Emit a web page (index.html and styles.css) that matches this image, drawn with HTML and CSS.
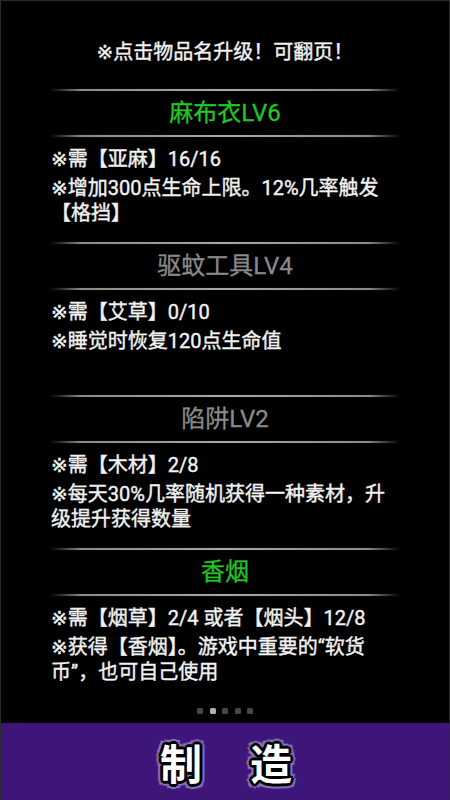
FILE: index.html
```html
<!DOCTYPE html>
<html lang="zh-CN">
<head>
<meta charset="utf-8">
<title>制造</title>
<link rel="stylesheet" href="styles.css">
</head>
<body>
<div class="screen">
  <main class="content">
    <p class="notice">※点击物品名升级！可翻页！</p>
    <div class="list">
      <section class="item">
        <div class="divider"></div>
        <h2 class="title title-ok">麻布衣LV6</h2>
        <div class="divider"></div>
        <div class="body">
          <p>※需【亚麻】16/16</p>
          <p>※增加300点生命上限。12%几率触发【格挡】</p>
        </div>
      </section>
      <section class="item">
        <div class="divider"></div>
        <h2 class="title title-locked">驱蚊工具LV4</h2>
        <div class="divider"></div>
        <div class="body">
          <p>※需【艾草】0/10</p>
          <p>※睡觉时恢复120点生命值</p>
        </div>
      </section>
      <section class="item">
        <div class="divider"></div>
        <h2 class="title title-locked">陷阱LV2</h2>
        <div class="divider"></div>
        <div class="body">
          <p>※需【木材】2/8</p>
          <p>※每天30%几率随机获得一种素材，升级提升获得数量</p>
        </div>
      </section>
      <section class="item">
        <div class="divider"></div>
        <h2 class="title title-ok">香烟</h2>
        <div class="divider"></div>
        <div class="body">
          <p>※需【烟草】2/4 或者【烟头】12/8</p>
          <p>※获得【香烟】。游戏中重要的“软货币”，也可自己使用</p>
        </div>
      </section>
    </div>
    <div class="dots">
      <span class="dot"></span>
      <span class="dot dot-active"></span>
      <span class="dot"></span>
      <span class="dot"></span>
      <span class="dot"></span>
    </div>
  </main>
  <footer class="bar">
    <span class="bar-char">制</span>
    <span class="bar-char">造</span>
  </footer>
</div>
</body>
</html>
```

FILE: styles.css
```css
* {
  box-sizing: border-box;
}

html, body {
  margin: 0;
  padding: 0;
  background: #000;
}

body {
  font-family: Roboto, "DejaVu Sans", "Noto Sans CJK SC", sans-serif;
  color: #f2f2f2;
}

.screen {
  width: 450px;
  height: 800px;
  border: 1px solid #2c2c2c;
  border-bottom: none;
  display: flex;
  flex-direction: column;
  overflow: hidden;
}

.content {
  flex: 1;
  display: flex;
  flex-direction: column;
  padding: 0 49px;
}

.notice {
  margin: 38px 0 24px;
  height: 26px;
  line-height: 26px;
  font-size: 20px;
  text-align: center;
  -webkit-text-stroke: 0.4px #f2f2f2;
}

.list {
  display: flex;
  flex-direction: column;
}

.item {
  display: flex;
  flex-direction: column;
  height: 153px;
}

.divider {
  height: 2px;
  background: linear-gradient(to right, rgba(150,150,150,0) 0%, #8a8a8a 9%, #a8a8a8 50%, #8a8a8a 91%, rgba(150,150,150,0) 100%);
  box-shadow: 0 0 1px rgba(120,120,120,0.6);
}

.title {
  margin: 0;
  height: 44px;
  line-height: 44px;
  font-size: 24px;
  font-weight: normal;
  text-align: center;
  -webkit-text-stroke: 0.3px currentColor;
}

.title-ok {
  color: #25c525;
}

.title-locked {
  color: #8a8a8a;
}

.body {
  padding: 10px 3px 0 1px;
  display: flex;
  flex-direction: column;
  gap: 4px;
}

.body p {
  margin: 0;
  font-size: 20px;
  line-height: 25px;
  -webkit-text-stroke: 0.4px #f2f2f2;
}

.dots {
  margin-top: auto;
  margin-bottom: 9px;
  display: flex;
  justify-content: center;
  gap: 6.5px;
}

.dot {
  width: 6px;
  height: 6px;
  border-radius: 1.5px;
  background: #474747;
}

.dot-active {
  background: #b0b0b0;
}

.bar {
  height: 77px;
  background: #3e1578;
  display: flex;
  justify-content: center;
  align-items: center;
  gap: 46px;
}

.bar-char {
  font-family: "Noto Sans CJK SC", sans-serif;
  font-size: 42px;
  font-weight: bold;
  line-height: 1;
  color: #fff;
  padding-left: 2px;
  text-shadow:
    3px 0 0 #000, -3px 0 0 #000, 0 3px 0 #000, 0 -3px 0 #000,
    2px 2px 0 #000, -2px 2px 0 #000, 2px -2px 0 #000, -2px -2px 0 #000,
    5px 0 1px #8a72bd, -5px 0 1px #8a72bd, 0 5px 1px #8a72bd, 0 -5px 1px #8a72bd,
    4px 4px 1px #8a72bd, -4px 4px 1px #8a72bd, 4px -4px 1px #8a72bd, -4px -4px 1px #8a72bd;
}
```
